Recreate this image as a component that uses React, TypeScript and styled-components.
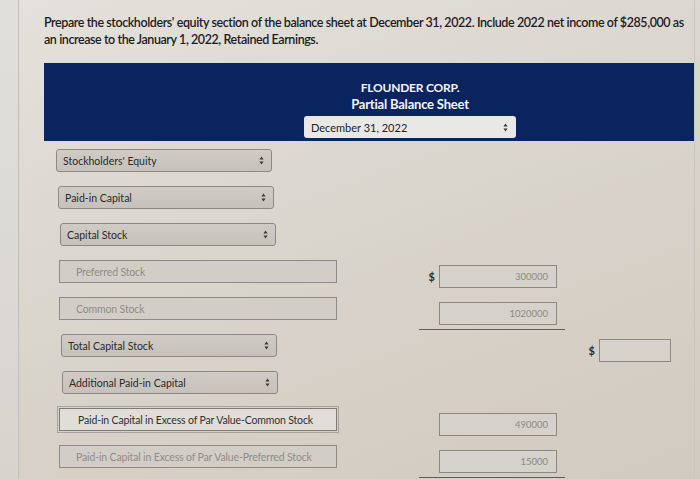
import React from 'react';
import styled, { createGlobalStyle } from 'styled-components';

const GlobalStyle = createGlobalStyle`
  html, body {
    margin: 0;
    padding: 0;
    background: #d9d5ce;
  }
  * {
    box-sizing: border-box;
  }
`;

const Screen = styled.div`
  display: flex;
  width: 700px;
  height: 479px;
  overflow: hidden;
  font-family: Lato, "Open Sans", sans-serif;
  background: linear-gradient(160deg, #e4e1dc 0%, #dad5cd 45%, #d1cac0 100%);
`;

const PageEdge = styled.div`
  flex: 0 0 19px;
  background: linear-gradient(180deg, #e0dfdb 0%, #d7d4ce 100%);
  border-right: 1px solid #c2bfb9;
`;

const Content = styled.main`
  flex: 0 0 671px;
  padding: 14px 0 0 25px;
  border-right: 1px solid #c9c6c0;
`;

const Question = styled.p`
  margin: 0 0 15px;
  width: 650px;
  font-size: 12.5px;
  line-height: 17px;
  letter-spacing: -0.42px;
  color: #1c1c1e;
  font-weight: 600;
`;

const Header = styled.header`
  display: flex;
  flex-direction: column;
  align-items: center;
  height: 78px;
  padding: 16px 0 0 82px;
  background: #0a2460;
  color: #f4f4f6;
  font-weight: 700;
`;

const HeaderLine = styled.div<{ $size: number }>`
  font-size: ${(p) => p.$size}px;
  line-height: 17px;
  letter-spacing: -0.2px;
`;

const HeaderSelect = styled.div`
  display: flex;
  align-items: center;
  justify-content: space-between;
  width: 212px;
  height: 22px;
  margin-top: 3px;
  padding: 0 8px 0 7px;
  border-radius: 3px;
  background: #e9e8e6;
  color: #222;
  font-size: 11px;
  font-weight: 400;
`;

const Rows = styled.div`
  display: flex;
  flex-direction: column;
  margin-top: 8px;
`;

const Row = styled.div`
  display: grid;
  grid-template-columns: 363px 146px 114px;
  align-items: start;
  height: 37px;
  padding-left: 12px;
`;

const Select = styled.div<{ $indent?: number }>`
  display: flex;
  align-items: center;
  justify-content: space-between;
  width: 216px;
  height: 23px;
  margin-left: ${(p) => p.$indent ?? 0}px;
  padding: 0 7px 0 6px;
  border: 1px solid #8c8984;
  border-radius: 3px;
  background: linear-gradient(180deg, #d0ccc5 0%, #c6c2bb 100%);
  color: #2a2a2a;
  font-size: 10.5px;
`;

const LabelInput = styled.div<{ $focused?: boolean }>`
  display: flex;
  align-items: center;
  width: 278px;
  height: 23px;
  margin-left: 3px;
  padding-left: ${(p) => (p.$focused ? 18 : 16)}px;
  border: 1px solid ${(p) => (p.$focused ? '#7e7b76' : '#8e8b86')};
  outline: ${(p) => (p.$focused ? '1px solid #a7a39d' : 'none')};
  outline-offset: 1px;
  background: ${(p) => (p.$focused ? '#e1ded9' : '#d2cec7')};
  color: ${(p) => (p.$focused ? '#2f2f30' : '#8f8c88')};
  font-size: 10.5px;
  letter-spacing: -0.15px;
  white-space: nowrap;
`;

const AmountCell = styled.div<{ $underline?: boolean }>`
  display: flex;
  align-items: center;
  justify-content: flex-end;
  gap: 4px;
  height: 33px;
  padding: 4px 8px 4px 0;
  border-bottom: 1.5px solid ${(p) => (p.$underline ? '#5f5d5a' : 'transparent')};
`;

const Dollar = styled.span`
  color: #2b2b2b;
  font-size: 11px;
  font-weight: 700;
`;

const Amount = styled.div<{ $width: number }>`
  display: flex;
  align-items: center;
  justify-content: flex-end;
  width: ${(p) => p.$width}px;
  height: 23px;
  padding-right: 8px;
  border: 1px solid #8a8883;
  background: #d5d1cb;
  color: #8c8985;
  font-size: 9.5px;
`;

const Arrows = () => (
  <svg width="5" height="9" viewBox="0 0 5 9">
    <path d="M2.5 0.5 L4.6 3.6 H0.4 Z M2.5 8.5 L4.6 5.4 H0.4 Z" fill="#3a3a3a" />
  </svg>
);

const Dropdown: React.FC<{ label: string; indent?: number }> = ({ label, indent }) => (
  <Select $indent={indent}>
    <span>{label}</span>
    <Arrows />
  </Select>
);

const Money: React.FC<{ value?: string; dollar?: boolean; width: number; underline?: boolean }> = ({
  value,
  dollar,
  width,
  underline,
}) => (
  <AmountCell $underline={underline}>
    {dollar && <Dollar>$</Dollar>}
    <Amount $width={width}>{value}</Amount>
  </AmountCell>
);

export default function App() {
  return (
    <>
      <GlobalStyle />
      <Screen>
        <PageEdge />
        <Content>
          <Question>
            Prepare the stockholders' equity section of the balance sheet at December 31, 2022. Include 2022 net income
            of $285,000 as an increase to the January 1, 2022, Retained Earnings.
          </Question>
          <Header>
            <HeaderLine $size={12}>FLOUNDER CORP.</HeaderLine>
            <HeaderLine $size={13}>Partial Balance Sheet</HeaderLine>
            <HeaderSelect>
              <span>December 31, 2022</span>
              <Arrows />
            </HeaderSelect>
          </Header>
          <Rows>
            <Row>
              <Dropdown label="Stockholders' Equity" />
            </Row>
            <Row>
              <Dropdown label="Paid-in Capital" indent={2} />
            </Row>
            <Row>
              <Dropdown label="Capital Stock" indent={4} />
            </Row>
            <Row>
              <LabelInput>Preferred Stock</LabelInput>
              <Money dollar value="300000" width={118} />
            </Row>
            <Row>
              <LabelInput>Common Stock</LabelInput>
              <Money value="1020000" width={118} underline />
            </Row>
            <Row>
              <Dropdown label="Total Capital Stock" indent={5} />
              <div />
              <Money dollar width={72} />
            </Row>
            <Row>
              <Dropdown label="Additional Paid-in Capital" indent={6} />
            </Row>
            <Row>
              <LabelInput $focused>Paid-in Capital in Excess of Par Value-Common Stock</LabelInput>
              <Money value="490000" width={118} />
            </Row>
            <Row>
              <LabelInput>Paid-in Capital in Excess of Par Value-Preferred Stock</LabelInput>
              <Money value="15000" width={118} underline />
            </Row>
          </Rows>
        </Content>
      </Screen>
    </>
  );
}
